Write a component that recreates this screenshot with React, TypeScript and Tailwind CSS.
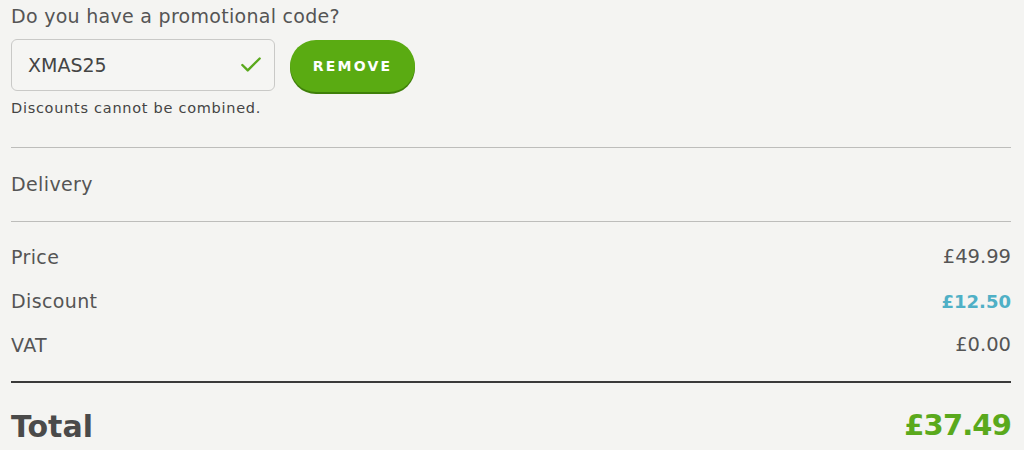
import { Check } from 'lucide-react';

const font = { fontFamily: '"DejaVu Sans", "Noto Sans", sans-serif' };

function Row({ label, value, valueClass }: { label: string; value: string; valueClass: string }) {
  return (
    <div className="flex items-center justify-between h-[44px]">
      <span className="text-[19px] tracking-[0.02em] text-[#555555]">{label}</span>
      <span className={valueClass}>{value}</span>
    </div>
  );
}

export default function App() {
  return (
    <div className="min-h-screen w-[1024px] h-[450px] overflow-hidden bg-[#f4f4f2] pl-[11px] pr-[13px]" style={font}>
      {/* Promo code */}
      <div className="pt-[4px]">
        <div className="text-[19px] leading-[24px] tracking-[0.015em] text-[#555555]">Do you have a promotional code?</div>
        <div className="flex items-center gap-[15px] mt-[10px]">
          <div className="w-[264px] h-[52px] rounded-[6px] border border-[#c9c9c7] bg-[#f5f5f3] flex items-center justify-between pl-[16px] pr-[10px]">
            <span className="text-[19px] text-[#444444]">XMAS25</span>
            <Check className="w-[26px] h-[26px] text-[#5aa91c]" strokeWidth={2.2} />
          </div>
          <button className="w-[125px] h-[52px] mt-[2px] rounded-full bg-[#5aab12] text-white text-[14px] font-bold tracking-[0.16em] shadow-[0_2px_0_#3f7f0a]">
            REMOVE
          </button>
        </div>
        <div className="mt-[7px] text-[14.5px] leading-[18px] tracking-[0.05em] text-[#444444]">Discounts cannot be combined.</div>
      </div>

      <div className="mt-[30px] border-t border-[#bdbdbb]" />
      <div className="h-[73px] flex items-center text-[19px] tracking-[0.02em] text-[#555555]">Delivery</div>
      <div className="border-t border-[#bdbdbb]" />

      <div className="pt-[13px]">
        <Row label="Price" value="£49.99" valueClass="text-[19.5px] text-[#555555]" />
        <Row label="Discount" value="£12.50" valueClass="text-[18px] font-bold text-[#4fb0c6]" />
        <Row label="VAT" value="£0.00" valueClass="text-[19.5px] text-[#555555]" />
      </div>

      <div className="mt-[14px] border-t-2 border-[#3a3a3a]" />
      <div className="flex items-center justify-between h-[86px]">
        <span className="text-[30px] font-bold text-[#4a4a4a]">Total</span>
        <span className="text-[29px] font-bold tracking-[-0.03em] text-[#5aa91c]">£37.49</span>
      </div>
    </div>
  );
}
